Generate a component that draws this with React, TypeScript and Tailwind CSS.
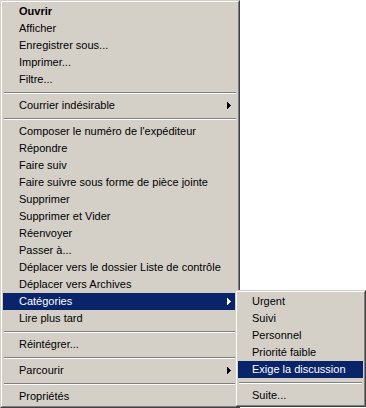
import React from "react";

type Entry =
    | { kind: "sep" }
    | { kind: "item"; label: string; bold?: boolean; sub?: boolean; active?: boolean };

const sep: Entry = { kind: "sep" };
const item = (label: string, opts: { bold?: boolean; sub?: boolean; active?: boolean } = {}): Entry => ({
    kind: "item",
    label,
    ...opts,
});

const mainEntries: Entry[] = [
    item("Ouvrir", { bold: true }),
    item("Afficher"),
    item("Enregistrer sous..."),
    item("Imprimer..."),
    item("Filtre..."),
    sep,
    item("Courrier indésirable", { sub: true }),
    sep,
    item("Composer le numéro de l'expéditeur"),
    item("Répondre"),
    item("Faire suiv"),
    item("Faire suivre sous forme de pièce jointe"),
    item("Supprimer"),
    item("Supprimer et Vider"),
    item("Réenvoyer"),
    item("Passer à..."),
    item("Déplacer vers le dossier Liste de contrôle"),
    item("Déplacer vers Archives"),
    item("Catégories", { sub: true, active: true }),
    item("Lire plus tard"),
    sep,
    item("Réintégrer..."),
    sep,
    item("Parcourir", { sub: true }),
    sep,
    item("Propriétés"),
];

const subEntries: Entry[] = [
    item("Urgent"),
    item("Suivi"),
    item("Personnel"),
    item("Priorité faible"),
    item("Exige la discussion", { active: true }),
    sep,
    item("Suite..."),
];

function Arrow({ white }: { white?: boolean }) {
    return (
        <svg width="4" height="7" viewBox="0 0 4 7" shapeRendering="crispEdges" className="block">
            <g fill={white ? "#ffffff" : "#000000"}>
                <rect x="0" y="0" width="1" height="7" />
                <rect x="1" y="1" width="1" height="5" />
                <rect x="2" y="2" width="1" height="3" />
                <rect x="3" y="3" width="1" height="1" />
            </g>
        </svg>
    );
}

function MenuList({ entries, textPad }: { entries: Entry[]; textPad: string }) {
    return (
        <div className="flex flex-col">
            {entries.map((e, i) => {
                if (e.kind === "sep") {
                    return (
                        <div key={i} className="h-[9px] pt-[4px] px-px">
                            <div className="h-px bg-[#808080]" />
                            <div className="h-px bg-white" />
                        </div>
                    );
                }
                return (
                    <div
                        key={i}
                        className={`flex h-[17px] items-center pr-[6px] ${textPad} ${
                            e.active ? "bg-[#0a246a] text-white" : "text-black"
                        }`}
                    >
                        <span className={`flex-1 whitespace-nowrap leading-[17px] ${e.bold ? "font-bold" : ""}`}>
                            {e.label}
                        </span>
                        {e.sub && <Arrow white={e.active} />}
                    </div>
                );
            })}
        </div>
    );
}

function Frame({ children, className }: { children: React.ReactNode; className: string }) {
    return (
        <div
            className={`border border-t-[#d4d0c8] border-l-[#d4d0c8] border-r-[#404040] border-b-[#404040] bg-[#d4d0c8] ${className}`}
        >
            <div className="border border-t-white border-l-white border-r-[#808080] border-b-[#808080] p-px">
                {children}
            </div>
        </div>
    );
}

export default function App() {
    return (
        <div className="relative h-[408px] w-[366px] overflow-hidden bg-white font-['Liberation_Sans',Arial,sans-serif] text-[11px]">
            <Frame className="w-[240px]">
                <MenuList entries={mainEntries} textPad="pl-[16px]" />
            </Frame>
            <div className="absolute left-[235px] top-[290px]">
                <Frame className="w-[131px]">
                    <MenuList entries={subEntries} textPad="pl-[14px]" />
                </Frame>
            </div>
        </div>
    );
}
